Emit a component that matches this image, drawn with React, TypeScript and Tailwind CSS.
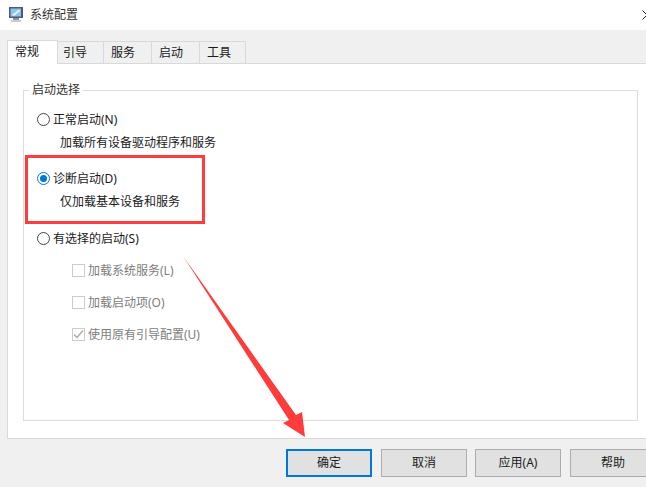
import React from "react";

const FONT = "font-['Noto_Sans','Noto_Sans_CJK_SC',sans-serif]";

function Radio({ checked }: { checked?: boolean }) {
  return (
    <span
      className={`flex h-[13px] w-[13px] shrink-0 items-center justify-center rounded-full border bg-white ${
        checked ? "border-[#0078d7]" : "border-[#444444]"
      }`}
    >
      {checked && <span className="h-[7px] w-[7px] rounded-full bg-[#0078d7]" />}
    </span>
  );
}

function RadioRow({ label, checked, className }: { label: string; checked?: boolean; className?: string }) {
  return (
    <div className={`flex h-[16px] items-center gap-[3px] pl-[13px] text-[12px] leading-[16px] text-[#1a1a1a] ${className ?? ""}`}>
      <Radio checked={checked} />
      <span className="translate-y-px">{label}</span>
    </div>
  );
}

function Check({ label, checked, className }: { label: string; checked?: boolean; className?: string }) {
  return (
    <div className={`flex h-[16px] items-center gap-[3px] pl-[48px] text-[12px] leading-[16px] text-[#7d7d7d] ${className ?? ""}`}>
      <span className="flex h-[13px] w-[13px] shrink-0 items-center justify-center border border-[#cccccc] bg-white">
        {checked && (
          <svg width="11" height="11" viewBox="0 0 11 11" fill="none">
            <path d="M1 5.5 L4 8.5 L10 1.5" stroke="#a8a8a8" strokeWidth="1.3" />
          </svg>
        )}
      </span>
      <span className="translate-y-px">{label}</span>
    </div>
  );
}

function Tab({ label, active, className }: { label: string; active?: boolean; className?: string }) {
  return active ? (
    <div className="z-10 -mb-px flex h-[24px] w-[51px] items-start border border-b-0 border-[#d9d9d9] bg-white pl-[7px] pt-[3px] text-[12px] leading-[16px] text-[#1a1a1a]">
      {label}
    </div>
  ) : (
    <div
      className={`-ml-px mt-[2px] flex h-[22px] items-center border border-b-0 border-[#d9d9d9] bg-[#f0f0f0] text-[12px] leading-[16px] text-[#1a1a1a] ${className ?? ""}`}
    >
      {label}
    </div>
  );
}

function Btn({ label, primary, className }: { label: string; primary?: boolean; className?: string }) {
  return (
    <div
      className={`flex h-[28px] w-[86px] shrink-0 items-center justify-center bg-[#e1e1e1] text-[12px] text-[#1a1a1a] ${
        primary ? "border-2 border-[#0078d7]" : "border border-[#adadad]"
      } ${className ?? ""}`}
    >
      {label}
    </div>
  );
}

export default function App() {
  return (
    <div className={`relative h-[487px] w-[646px] overflow-hidden bg-[#f0f0f0] ${FONT}`}>
      {/* title bar */}
      <div className="flex h-[30px] items-center bg-white pl-[8px]">
        <svg width="16" height="18" viewBox="0 0 16 18" className="shrink-0">
          <rect x="1" y="1" width="14" height="11" fill="#4a5a78" />
          <rect x="2.5" y="2.5" width="10.5" height="8" fill="#8fc3ea" />
          <path d="M4 9 L11 3.5 L12 5 L6 10 Z" fill="#e8f4fb" />
          <rect x="5" y="12" width="6" height="2" fill="#8b93a1" />
          <rect x="3" y="14" width="10" height="2" fill="#c9ccd1" />
        </svg>
        <span className="ml-[6px] text-[12px] text-[#333333]">系统配置</span>
        <svg width="10" height="10" viewBox="0 0 10 10" className="ml-auto -mr-[6px] shrink-0" fill="none">
          <path d="M0.5 0.5 L9.5 9.5 M9.5 0.5 L0.5 9.5" stroke="#222222" strokeWidth="1" />
        </svg>
      </div>

      {/* tabs + panel */}
      <div className="px-[7px] pt-[9px]">
        <div className="flex h-[24px] items-end">
          <Tab label="常规" active />
          <Tab label="引导" className="w-[47px] pl-[5px]" />
          <Tab label="服务" className="w-[49px] pl-[7px]" />
          <Tab label="启动" className="w-[49px] pl-[7px]" />
          <Tab label="工具" className="w-[47px] pl-[7px]" />
        </div>
        <div className="-mr-[10px] h-[376px] border border-[#d9d9d9] bg-white pl-[15px] pt-[26px]">
          <div className="relative h-[331px] w-[615px] border border-[#dcdcdc] pt-[20px]">
            <span className="absolute -top-[9px] left-[5px] bg-white px-[3px] text-[12px] leading-[16px] text-[#333333]">
              启动选择
            </span>
            <RadioRow label="正常启动(N)" />
            <div className="mt-[7px] h-[16px] translate-y-px pl-[36px] text-[12px] leading-[16px] text-[#1a1a1a]">加载所有设备驱动程序和服务</div>
            <RadioRow label="诊断启动(D)" checked className="mt-[20px]" />
            <div className="mt-[7px] h-[16px] translate-y-px pl-[36px] text-[12px] leading-[16px] text-[#1a1a1a]">仅加载基本设备和服务</div>
            <RadioRow label="有选择的启动(S)" className="mt-[21px]" />
            <Check label="加载系统服务(L)" className="mt-[16px]" />
            <Check label="加载启动项(O)" className="mt-[16px]" />
            <Check label="使用原有引导配置(U)" checked className="mt-[16px]" />
          </div>
        </div>
      </div>

      {/* footer buttons */}
      <div className="mt-[10px] flex pl-[286px]">
        <Btn label="确定" primary />
        <Btn label="取消" className="ml-[9px]" />
        <Btn label="应用(A)" className="ml-[8px]" />
        <Btn label="帮助" className="ml-[9px]" />
      </div>

      {/* annotations over the screenshot */}
      <div className="absolute left-[25px] top-[155px] h-[69px] w-[180px] border-[3px] border-[#ff3b3b]" />
      <svg className="absolute left-0 top-0" width="646" height="487" viewBox="0 0 646 487">
        <polygon points="183,256 296,415 302,412 305,437 283,423 289,420" fill="#ff3b3b" />
      </svg>
    </div>
  );
}
